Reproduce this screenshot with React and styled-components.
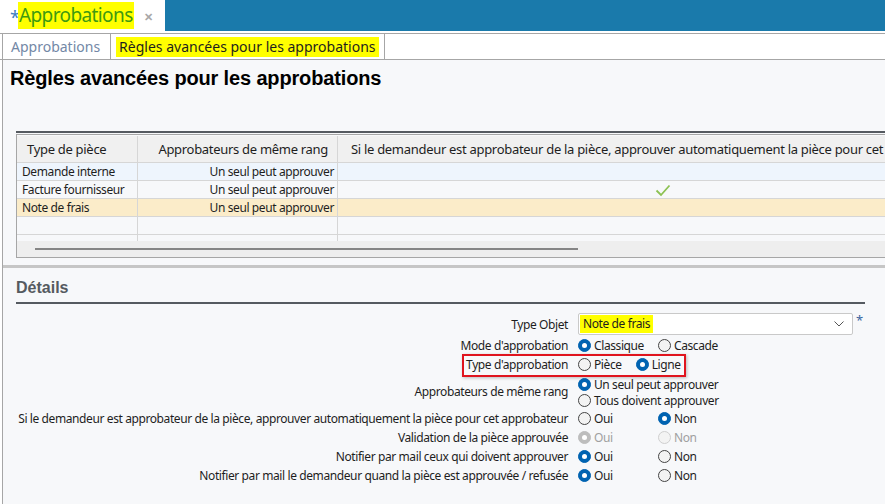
import styled, { createGlobalStyle } from 'styled-components';

const GlobalStyle = createGlobalStyle`
  html, body { margin: 0; padding: 0; background: #ffffff; }
  body { font-family: "Noto Sans", "Open Sans", sans-serif; color: #1e1e1e; }
`;

const rows = [
  { type: 'Demande interne', rang: 'Un seul peut approuver', auto: false, tone: 'blue' },
  { type: 'Facture fournisseur', rang: 'Un seul peut approuver', auto: true, tone: 'plain' },
  { type: 'Note de frais', rang: 'Un seul peut approuver', auto: false, tone: 'orange' },
  { type: '', rang: '', auto: false, tone: 'plain' },
  { type: '', rang: '', auto: false, tone: 'plain' },
];

const Radio = ({ checked, disabled, label, width }) => (
  <Option $width={width} $disabled={disabled}>
    <Dot $checked={checked} $disabled={disabled} />
    {label}
  </Option>
);

const App = () => {
  return (
    <Root>
      <GlobalStyle />
      <TopBar>
        <DocTab>
          <Star>*</Star>
          <DocTitle>Approbations</DocTitle>
          <Close>✕</Close>
        </DocTab>
        <BlueFill />
      </TopBar>

      <TabStrip>
        <Tab>Approbations</Tab>
        <Tab $active>
          <Marked>Règles avancées pour les approbations</Marked>
        </Tab>
      </TabStrip>

      <Content>
        <PageTitle>Règles avancées pour les approbations</PageTitle>

        <GridSection>
          <DarkRule />
          <GridBox>
            <HeadRow>
              <HeadCell $w={121} $pl={10}>Type de pièce</HeadCell>
              <HeadCell $w={200} $align="right" $pr={9}>Approbateurs de même rang</HeadCell>
              <HeadCell $w={700} $pl={13}>
                Si le demandeur est approbateur de la pièce, approuver automatiquement la pièce pour cet approbateur
              </HeadCell>
            </HeadRow>
            <Body>
              {rows.map((r, i) => (
                <DataRow key={i} $tone={r.tone}>
                  <Cell $w={121} $pl={5}>{r.type}</Cell>
                  <Cell $w={200} $align="right" $pr={3}>{r.rang}</Cell>
                  <Cell $w={700}>
                    {r.auto && (
                      <CheckCol>
                        <svg width="16" height="13" viewBox="0 0 16 13">
                          <polyline points="1.5,6.5 6,11 14.5,1.5" fill="none" stroke="#8cc152" strokeWidth="1.8" />
                        </svg>
                      </CheckCol>
                    )}
                  </Cell>
                </DataRow>
              ))}
            </Body>
            <HScroll>
              <Thumb />
            </HScroll>
          </GridBox>
        </GridSection>

        <Splitter />

        <Details>
          <SectionTitle>Détails</SectionTitle>
          <Form>
            <Label>Type Objet</Label>
            <SelectWrap>
              <Select>
                <Marked>Note de frais</Marked>
                <svg width="10" height="6" viewBox="0 0 10 6">
                  <polyline points="0.5,0.5 5,5 9.5,0.5" fill="none" stroke="#555" strokeWidth="1" />
                </svg>
              </Select>
              <Required>*</Required>
            </SelectWrap>

            <Label>Mode d'approbation</Label>
            <Group>
              <Radio checked label="Classique" />
              <Radio label="Cascade" />
            </Group>

            <Label>Type d'approbation</Label>
            <Group>
              <Radio label="Pièce" />
              <Radio checked label="Ligne" />
              <Annotation />
            </Group>

            <Label>Approbateurs de même rang</Label>
            <Stack>
              <Radio checked label="Un seul peut approuver" />
              <Radio label="Tous doivent approuver" />
            </Stack>

            <Label>Si le demandeur est approbateur de la pièce, approuver automatiquement la pièce pour cet approbateur</Label>
            <Group>
              <Radio label="Oui" width={80} />
              <Radio checked label="Non" />
            </Group>

            <Label>Validation de la pièce approuvée</Label>
            <Group>
              <Radio checked disabled label="Oui" width={80} />
              <Radio disabled label="Non" />
            </Group>

            <Label>Notifier par mail ceux qui doivent approuver</Label>
            <Group>
              <Radio checked label="Oui" width={80} />
              <Radio label="Non" />
            </Group>

            <Label>Notifier par mail le demandeur quand la pièce est approuvée / refusée</Label>
            <Group>
              <Radio checked label="Oui" width={80} />
              <Radio label="Non" />
            </Group>
          </Form>
        </Details>
      </Content>
    </Root>
  );
};

const Root = styled.div`
  width: 885px;
  height: 504px;
  overflow: hidden;
  display: flex;
  flex-direction: column;
  background: #ffffff;
`;

const TopBar = styled.div`
  display: flex;
  height: 31px;
`;

const DocTab = styled.div`
  width: 165px;
  display: flex;
  align-items: center;
  padding-left: 10px;
  box-sizing: border-box;
`;

const Star = styled.span`
  color: #3f7fbf;
  font-size: 18px;
  align-self: center;
  margin-top: 2px;
  margin-right: -2px;
`;

const DocTitle = styled.span`
  background: #ffff00;
  color: #3f9a10;
  font-size: 19px;
  letter-spacing: -0.6px;
  line-height: 27px;
  padding: 0 1px;
`;

const Close = styled.span`
  color: #a8a8a8;
  font-size: 11px;
  font-weight: bold;
  margin-left: 10px;
  margin-top: 2px;
`;

const BlueFill = styled.div`
  flex: 1;
  background: #1a7aab;
`;

const TabStrip = styled.div`
  margin-top: 2px;
  height: 25px;
  border-top: 1px solid #a6a6a6;
  border-bottom: 1px solid #a6a6a6;
  display: flex;
  padding-left: 2px;
`;

const Tab = styled.div`
  display: flex;
  align-items: center;
  padding: 0 ${(p) => (p.$active ? '5px' : '8px')};
  margin-top: -1px;
  border-left: 1px solid #a6a6a6;
  border-right: ${(p) => (p.$active ? '1px solid #a6a6a6' : 'none')};
  margin-right: ${(p) => (p.$active ? '0' : '2px')};
  border-top: 1px solid #a6a6a6;
  font-size: 14px;
  color: ${(p) => (p.$active ? '#1e1e1e' : '#7388a6')};
  background: #ffffff;
`;

const Marked = styled.span`
  background: #ffff00;
  line-height: 20px;
  padding: 0 3px;
  color: #1e1e1e;
`;

const Content = styled.div`
  flex: 1;
  margin-left: 2px;
  border-left: 1px solid #a6a6a6;
  background: #f7f8fa;
  display: flex;
  flex-direction: column;
`;

const PageTitle = styled.h1`
  margin: 6px 0 0 7px;
  font-family: "Liberation Sans", Arial, sans-serif;
  font-size: 20px;
  letter-spacing: -0.15px;
  line-height: 24px;
  font-weight: bold;
  color: #000000;
`;

const GridSection = styled.div`
  margin-top: 41px;
  padding-left: 13px;
`;

const DarkRule = styled.div`
  height: 2px;
  background: #555a60;
`;

const GridBox = styled.div`
  margin-top: 1px;
  border: 1px solid #a6a6a6;
  border-right: none;
  width: 1100px;
  padding: 1px 0 0 0;
`;

const HeadRow = styled.div`
  display: flex;
  height: 26px;
  background: #f0f0f0;
  border-bottom: 1px solid #d6d6d6;
`;

const HeadCell = styled.div`
  flex: 0 0 ${(p) => p.$w}px;
  box-sizing: border-box;
  display: flex;
  align-items: center;
  justify-content: ${(p) => (p.$align === 'right' ? 'flex-end' : 'flex-start')};
  padding-left: ${(p) => p.$pl || 0}px;
  padding-right: ${(p) => p.$pr || 0}px;
  border-right: 1px solid #d6d6d6;
  font-size: 13px;
  letter-spacing: -0.3px;
  white-space: nowrap;
  overflow: hidden;
`;

const Body = styled.div`
  height: 78px;
  overflow: hidden;
`;

const tones = {
  blue: '#eef5fd',
  orange: '#fbecc9',
  plain: '#f7f8fa',
};

const DataRow = styled.div`
  display: flex;
  height: 17px;
  border-bottom: 1px solid #d6d6d6;
  background: ${(p) => tones[p.$tone]};
`;

const Cell = styled.div`
  flex: 0 0 ${(p) => p.$w}px;
  box-sizing: border-box;
  display: flex;
  align-items: center;
  justify-content: ${(p) => (p.$align === 'right' ? 'flex-end' : 'flex-start')};
  padding-left: ${(p) => p.$pl || 0}px;
  padding-right: ${(p) => p.$pr || 0}px;
  border-right: 1px solid #d6d6d6;
  font-size: 12px;
  letter-spacing: -0.4px;
  white-space: nowrap;
`;

const CheckCol = styled.div`
  margin-left: 317px;
  display: flex;
  margin-top: 2px;
`;

const HScroll = styled.div`
  height: 16px;
  background: #eeeeee;
  display: flex;
  align-items: center;
  padding-left: 18px;
`;

const Thumb = styled.div`
  width: 543px;
  height: 2px;
  background: #858585;
`;

const Splitter = styled.div`
  margin-top: 7px;
  height: 3px;
  background: #c6c6c6;
`;

const Details = styled.div`
  padding: 0 20px 0 13px;
  display: flex;
  flex-direction: column;
`;

const SectionTitle = styled.div`
  font-family: "Liberation Sans", Arial, sans-serif;
  font-size: 16px;
  font-weight: bold;
  color: #555a60;
  line-height: 20px;
  margin-top: 10px;
  padding-bottom: 4px;
  border-bottom: 2px solid #555a60;
`;

const Form = styled.div`
  display: grid;
  grid-template-columns: 552px 1fr;
  column-gap: 10px;
  margin-top: 9px;
  font-size: 12px;
  letter-spacing: -0.4px;
`;

const Label = styled.div`
  text-align: right;
  white-space: nowrap;
  display: flex;
  align-items: center;
  justify-content: flex-end;
  min-height: 19px;
`;

const SelectWrap = styled.div`
  display: flex;
  align-items: flex-start;
  margin-bottom: 1px;
`;

const Select = styled.div`
  width: 275px;
  height: 22px;
  box-sizing: border-box;
  border: 1px solid #c9c9c9;
  border-radius: 2px;
  background: #ffffff;
  display: flex;
  align-items: center;
  justify-content: space-between;
  padding: 0 8px 0 1px;
  font-size: 12px;

  span {
    line-height: 18px;
  }
`;

const Required = styled.span`
  color: #3a64a0;
  font-size: 13px;
  margin-left: 3px;
  line-height: 14px;
`;

const Group = styled.div`
  position: relative;
  display: flex;
  align-items: center;
  gap: 14px;
  height: 19px;
`;

const Stack = styled.div`
  display: flex;
  flex-direction: column;
  padding: 2px 0 1px;

  & > div {
    height: 16px;
  }
`;

const Option = styled.div`
  display: flex;
  align-items: center;
  gap: 3px;
  ${(p) => (p.$width ? `width: ${p.$width - 14}px;` : '')}
  color: ${(p) => (p.$disabled ? '#a0a0a0' : '#1e1e1e')};
  white-space: nowrap;
`;

const Dot = styled.span`
  width: 13px;
  height: 13px;
  box-sizing: border-box;
  border-radius: 50%;
  position: relative;
  flex: 0 0 13px;
  background: ${(p) => (p.$checked ? (p.$disabled ? '#bdbdbd' : '#0063b1') : '#f3f3f3')};
  border: 1px solid ${(p) => (p.$checked ? (p.$disabled ? '#bdbdbd' : '#0063b1') : p.$disabled ? '#cfcfcf' : '#444')};

  &::after {
    content: '';
    display: ${(p) => (p.$checked ? 'block' : 'none')};
    position: absolute;
    left: 3px;
    top: 3px;
    width: 5px;
    height: 5px;
    border-radius: 50%;
    background: #ffffff;
  }
`;

const Annotation = styled.div`
  position: absolute;
  left: -116px;
  top: -1px;
  width: 224px;
  height: 23px;
  box-sizing: border-box;
  border: 2px solid #e0141e;
  box-shadow: 1px 1px 3px rgba(0, 0, 0, 0.25);
  pointer-events: none;
`;

export default App;
